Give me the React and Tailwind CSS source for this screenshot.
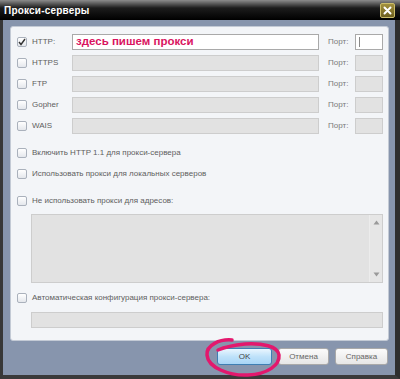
import { useState } from "react";

function Box({ checked }) {
  return (
    <span className="w-[10px] h-[10px] shrink-0 rounded-[2px] border border-[#aab1bc] bg-[linear-gradient(to_bottom,#ffffff,#e4e7ec)] flex items-center justify-center">
      {checked && (
        <svg width="8" height="8" viewBox="0 0 8 8">
          <path d="M1 4 L3 6.5 L7 1" fill="none" stroke="#333" strokeWidth="1.4" />
        </svg>
      )}
    </span>
  );
}

function Field({ active, className = "", children }) {
  return (
    <div
      className={
        "h-[16px] border " +
        (active ? "bg-white border-[#a9a9a9] " : "bg-[#e2e2e2] border-[#cdcdcd] ") +
        className
      }
    >
      {children}
    </div>
  );
}

function CheckLine({ label, className = "" }) {
  return (
    <div className={"h-[16px] flex items-center gap-[5px] " + className}>
      <Box />
      <span className="text-[8px] text-[#5e5e5e]">{label}</span>
    </div>
  );
}

export default function App() {
  const [rows] = useState([
    { name: "HTTP:", active: true },
    { name: "HTTPS", active: false },
    { name: "FTP", active: false },
    { name: "Gopher", active: false },
    { name: "WAIS", active: false },
  ]);

  return (
    <div className="w-[400px] h-[379px] relative flex flex-col bg-[#8795ad] font-['Liberation_Sans',Arial,sans-serif] overflow-hidden">
      {/* Заголовок окна */}
      <div className="h-[20px] shrink-0 flex items-center justify-between pl-[4px] pr-[5px] bg-[linear-gradient(to_bottom,#8c8c8c_0%,#1c1c1c_40%,#000_100%)]">
        <span className="text-[10px] font-bold text-white tracking-[0.2px]">Прокси-серверы</span>
        <div className="w-[15px] h-[15px] rounded-[2px] border border-[#cbbd6a] bg-[linear-gradient(to_bottom,#a3913c,#6d5f1f)] flex items-center justify-center">
          <svg width="9" height="9" viewBox="0 0 9 9">
            <path d="M1.5 1.5 L7.5 7.5 M7.5 1.5 L1.5 7.5" stroke="#fff" strokeWidth="2" strokeLinecap="round" />
          </svg>
        </div>
      </div>

      {/* Тело */}
      <div className="flex-1 flex flex-col border-l-[3px] border-l-[#383838] border-r-[5px] border-r-[#2e2e2e] border-b-[4px] border-b-[#3a3a3a] pt-[6px] pl-[7px] pr-[6px]">
        <div className="h-[315px] border border-[#c3cad5] rounded-[3px] bg-[#f3f5f8] pl-[6px] pr-[5px] pt-[7px] flex flex-col">
          <div className="flex flex-col gap-[5px]">
            {rows.map((r, i) => (
              <div key={r.name} className="h-[16px] flex items-center">
                <Box checked={i === 0} />
                <span className="w-[45px] shrink-0 pl-[5px] text-[8px] text-[#5e5e5e]">{r.name}</span>
                <Field active={r.active} className="flex-1 flex items-center pl-[3px]">
                  {i === 0 && (
                    <span className="text-[11.5px] leading-none font-bold text-[#d9145f]">здесь пишем прокси</span>
                  )}
                </Field>
                <span className="w-[36px] shrink-0 pl-[9px] text-[8px] text-[#7a7a7a]">Порт:</span>
                <Field active={r.active} className="w-[28px] shrink-0 flex items-center pl-[3px]">
                  {i === 0 && <span className="w-px h-[10px] bg-[#888]" />}
                </Field>
              </div>
            ))}
          </div>

          <CheckLine className="mt-[11px]" label="Включить HTTP 1.1 для прокси-сервера" />
          <CheckLine className="mt-[5px]" label="Использовать прокси для локальных серверов" />
          <CheckLine className="mt-[11px]" label="Не использовать прокси для адресов:" />

          <div className="mt-[5px] ml-[14px] h-[69px] border border-[#cdcdcd] bg-[#e2e2e2] flex justify-end">
            <div className="w-[13px] border-l border-[#ececec] bg-[#e6e6e6] flex flex-col items-center justify-between py-[5px]">
              <svg width="7" height="5" viewBox="0 0 7 5">
                <path d="M3.5 0.5 L6.5 4.5 L0.5 4.5 Z" fill="#9a9a9a" />
              </svg>
              <svg width="7" height="5" viewBox="0 0 7 5">
                <path d="M0.5 0.5 L6.5 0.5 L3.5 4.5 Z" fill="#9a9a9a" />
              </svg>
            </div>
          </div>

          <CheckLine className="mt-[7px]" label="Автоматическая конфигурация прокси-сервера:" />
          <Field className="mt-[6px] ml-[14px]" />
        </div>

        {/* Кнопки */}
        <div className="mt-[7px] flex justify-end pr-[1px] gap-[6px] text-[8px] text-[#666]">
          <button className="w-[55px] h-[17px] rounded-[3px] border border-[#3f7fb3] bg-[linear-gradient(to_bottom,#eaf6fe,#bfe2fa_50%,#a8d5f6)] text-[#444]">
            OK
          </button>
          <button className="w-[51px] h-[17px] rounded-[3px] border border-[#a9a9a9] bg-[linear-gradient(to_bottom,#fbfbfb,#e6e6e6)]">
            Отмена
          </button>
          <button className="w-[53px] h-[17px] rounded-[3px] border border-[#a9a9a9] bg-[linear-gradient(to_bottom,#fbfbfb,#e6e6e6)]">
            Справка
          </button>
        </div>
      </div>

      {/* Красная обводка от руки */}
      <svg className="absolute left-[200px] top-[335px]" width="90" height="44" viewBox="0 0 90 44">
        <path
          d="M32 5 C20 4, 6 10, 7 20 C8 33, 30 41, 48 40 C68 39, 80 30, 79 20 C78 11, 62 8, 45 9 C35 10, 25 12, 18 15"
          fill="none"
          stroke="#e3186d"
          strokeWidth="3.5"
          strokeLinecap="round"
        />
      </svg>
    </div>
  );
}
